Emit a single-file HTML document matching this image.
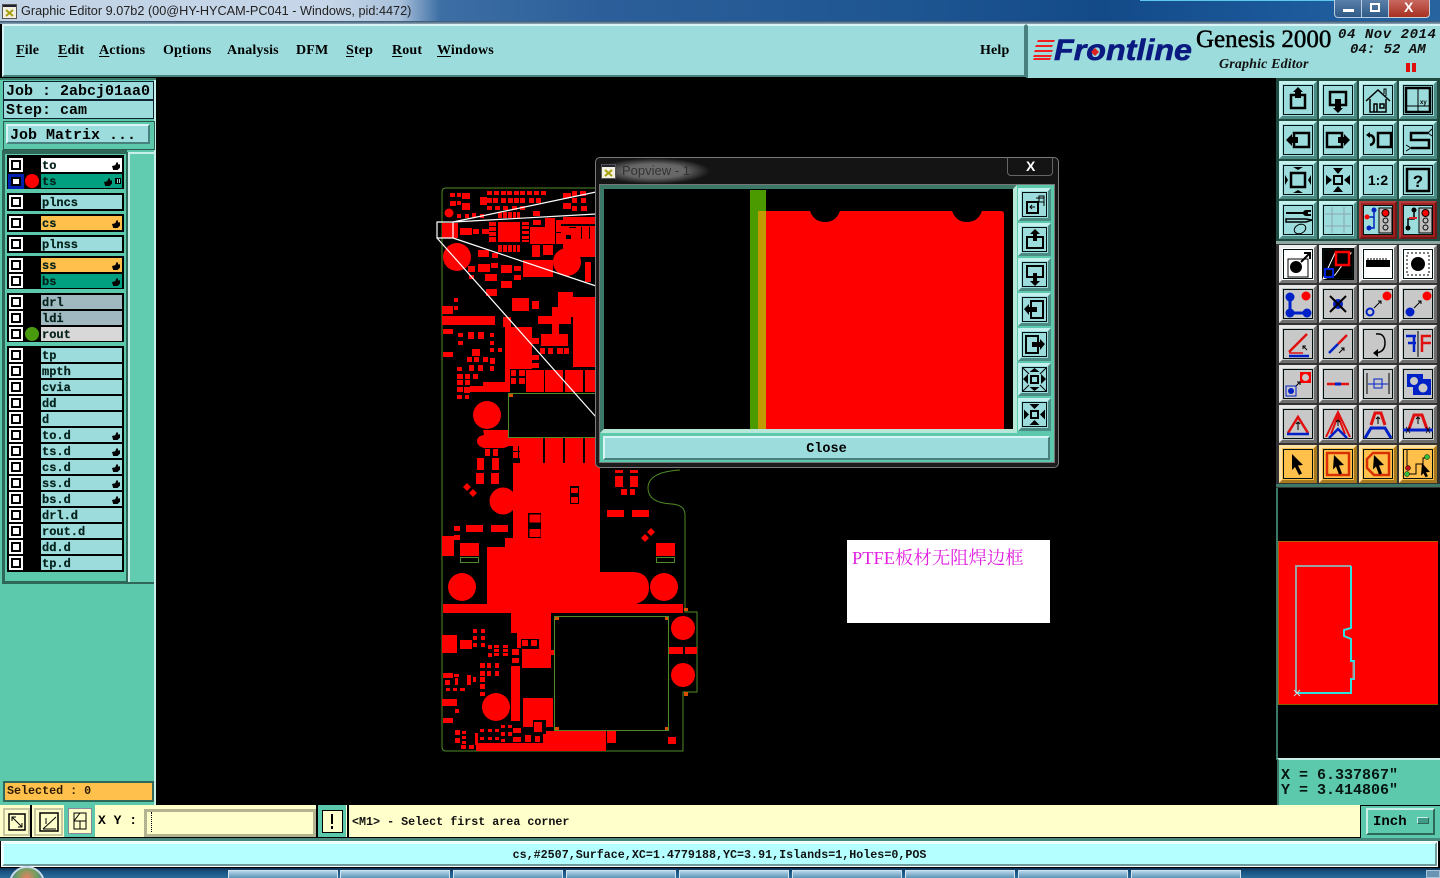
<!DOCTYPE html>
<html><head><meta charset="utf-8"><title>Graphic Editor</title>
<style>
html,body{margin:0;padding:0;background:#000;width:1440px;height:878px;overflow:hidden}
div,span{position:absolute;box-sizing:border-box}
#r{position:absolute;left:0;top:0;width:1440px;height:878px;overflow:hidden;font-family:"Liberation Mono",monospace;font-weight:bold;color:#000}
svg{position:absolute;left:0;top:0;overflow:visible}
.m{top:43px;font:bold 14px/16px "Liberation Serif",serif;color:#000;white-space:nowrap;letter-spacing:.15px}
.m u{text-underline-offset:2px}
.b{width:38px;height:38px;border:3px solid;}
.b::before{content:"";position:absolute;left:1px;top:1px;right:1px;bottom:1px;border:1px solid #011}
.b svg{left:-3px;top:-3px}
.t{background:#9cdcdc;border-color:#c4f0ee #4c8a84 #4c8a84 #c4f0ee}
.g{background:#c8c8c8;border-color:#e8e8e8 #6e6e6e #6e6e6e #e8e8e8}
.o{background:#ffc04c;border-color:#ffe2a4 #a87a20 #a87a20 #ffe2a4}
.w{background:#fff;border-color:#eee #777 #777 #eee}
.p{width:33px;height:33px}
.l{left:41px;width:81px;height:14px;background:#9cdcdc;font-size:12px;line-height:16px;padding-left:1px;white-space:nowrap;color:#04201a;-webkit-text-stroke:.2px #04201a}
.c{left:9px;width:14px;height:14px;background:#fff}
.c::after{content:"";position:absolute;left:2px;top:2px;width:10px;height:10px;border:2px solid #000;background:#fff;box-sizing:border-box}
.h{right:2px;top:4px;width:8px;height:8px;background:#000;clip-path:polygon(0 50%,40% 40%,60% 0,75% 10%,75% 30%,100% 30%,100% 70%,70% 100%,15% 100%)}
.tb{top:870px;height:8px;width:110px;background:linear-gradient(#b4d4e8,#5d94b8);border:1px solid #d0e4f0;border-bottom:0}
</style></head><body><div id="r">

<!-- title bar -->
<div style="left:0;top:0;width:1440px;height:22px;background:linear-gradient(90deg,#c2d3e6 0,#c6d6e8 330px,#a9c1db 400px,#3d6ea4 440px,#2c5f9a 600px,#1e5692 900px,#134a88 1100px,#1c5a9c 1300px,#27649f 1440px)"></div>
<div style="left:1140px;top:0;width:287px;height:1px;background:#5cc8ee"></div>
<div style="left:0;top:21px;width:1440px;height:3px;background:linear-gradient(#35506c,#8ea8b8)"></div>
<svg width="18" height="18" style="left:2px;top:4px"><rect x=".5" y=".5" width="14" height="14" fill="#f4f0e0" stroke="#555"/><rect x="1" y="1" width="13" height="2" fill="#223"/><path d="M4 6l7 6M11 6l-7 6" stroke="#a8a010" stroke-width="2"/></svg>
<div style="left:21px;top:3px;font:12.700px/16px 'Liberation Sans',sans-serif;color:#222;white-space:nowrap">Graphic Editor 9.07b2 (00@HY-HYCAM-PC041 - Windows, pid:4472)</div>
<div style="left:1334px;top:0;width:28px;height:18px;background:linear-gradient(#5a7fa8,#2f5a88);border:1px solid #b8cde0;border-top:0;border-radius:0 0 0 4px"></div>
<div style="left:1343px;top:9px;width:11px;height:3px;background:#fff"></div>
<div style="left:1362px;top:0;width:27px;height:18px;background:linear-gradient(#5a7fa8,#2f5a88);border:1px solid #b8cde0;border-top:0;border-left:0"></div>
<div style="left:1370px;top:3px;width:10px;height:9px;border:2px solid #fff"></div>
<div style="left:1389px;top:0;width:41px;height:18px;background:linear-gradient(#c86860,#a83020);border:1px solid #c8d0d8;border-top:0;border-left:0;border-radius:0 0 4px 0"></div>
<div style="left:1404px;top:0;font:bold 14px/14px 'Liberation Sans',sans-serif;color:#fff">X</div>

<!-- menu -->
<div style="left:2px;top:24px;width:1024px;height:53px;background:#9cdcdc;border:2px solid;border-color:#d8f4f4 #47807c #47807c #d8f4f4"></div>
<div class="m" style="left:16px"><u>F</u>ile</div>
<div class="m" style="left:58px"><u>E</u>dit</div>
<div class="m" style="left:99px"><u>A</u>ctions</div>
<div class="m" style="left:163px">O<u>p</u>tions</div>
<div class="m" style="left:227px">Analysis</div>
<div class="m" style="left:296px">DFM</div>
<div class="m" style="left:346px"><u>S</u>tep</div>
<div class="m" style="left:392px"><u>R</u>out</div>
<div class="m" style="left:437px"><u>W</u>indows</div>
<div class="m" style="left:980px">Help</div>

<!-- logo -->
<div style="left:1026px;top:24px;width:414px;height:54px;background:#9cdcdc;border-left:2px solid #47807c;border-top:2px solid #d8f4f4"></div>
<svg width="1440" height="80"><path d="M1038 40h17l-1 2h-17zM1036 45h17l-1 2h-17zM1035 50h18l-1 2h-18zM1034 55h18l-1 2h-18zM1034 58h17l-1 2h-17z" fill="#f02020"/>
<text x="1054" y="60" font-family="Liberation Sans" font-weight="bold" font-style="italic" font-size="30" fill="#0a1a80" stroke="#0a1a80" stroke-width=".6" textLength="138" lengthAdjust="spacingAndGlyphs">Frontline</text>
<path d="M1095 48l4 4-4 4-4-4z" fill="#e02020"/></svg>
<div style="left:1196px;top:25px;font:25px/30px 'Liberation Serif',serif;color:#000;white-space:nowrap;-webkit-text-stroke:.5px #000">Genesis 2000</div>
<div style="left:1219px;top:57px;font:italic bold 14px/16px 'Liberation Serif',serif;white-space:nowrap;color:#111;letter-spacing:.15px">Graphic Editor</div>
<div style="left:1338px;top:27px;font:italic bold 14px/16px 'Liberation Mono',monospace;white-space:pre;color:#111;letter-spacing:.55px">04 Nov 2014</div>
<div style="left:1350px;top:42px;font:italic bold 14px/16px 'Liberation Mono',monospace;white-space:pre;color:#111">04: 52 AM</div>
<div style="left:1406px;top:63px;width:4px;height:9px;background:#e01010"></div>
<div style="left:1412px;top:63px;width:4px;height:9px;background:#e01010"></div>

<!-- left panel -->
<div style="left:0;top:78px;width:156px;height:727px;background:#5cc8ac;border-right:2px solid #c8f0e8"></div>
<div style="left:0;top:78px;width:156px;height:2px;background:#3a7868"></div>
<div style="left:3px;top:81px;width:151px;height:19px;background:#9cdcdc;border:1px solid #123;font-size:15px;line-height:19px;padding-left:2px;white-space:pre">Job : 2abcj01aa0</div>
<div style="left:3px;top:100px;width:151px;height:19px;background:#9cdcdc;border:1px solid #123;font-size:15px;line-height:19px;padding-left:2px;white-space:pre">Step: cam</div>
<div style="left:3px;top:121px;width:152px;height:29px;background:#5cc8ac;border:1px solid #2a5a4c"></div>
<div style="left:6px;top:124px;width:144px;height:20px;background:#9cdcdc;border:2px solid;border-color:#d8f4f4 #47807c #47807c #d8f4f4;font-size:15px;line-height:19px;padding-left:2px;white-space:pre">Job Matrix ...</div>
<div style="left:2px;top:152px;width:124px;height:431px;border:2px solid #2f6858;border-left-width:3px;border-right:0"></div>
<div style="left:2px;top:150px;width:125px;height:3px;background:#2f6858"></div>
<div style="left:126px;top:152px;width:2px;height:431px;background:#2f6858"></div>
<div style="left:128px;top:152px;width:26px;height:431px;background:#62ccb0;border-top:2px solid #c8f0e8;border-left:2px solid #c8f0e8"></div>
<div style="left:2px;top:582px;width:152px;height:2px;background:#2f6858"></div>

<!-- layer groups -->
<div style="left:7px;top:155px;width:117px;height:34px;background:#000"></div>
<div style="left:7px;top:193px;width:117px;height:18px;background:#000"></div>
<div style="left:7px;top:214px;width:117px;height:18px;background:#000"></div>
<div style="left:7px;top:235px;width:117px;height:18px;background:#000"></div>
<div style="left:7px;top:256px;width:117px;height:33px;background:#000"></div>
<div style="left:7px;top:293px;width:117px;height:49px;background:#000"></div>
<div style="left:7px;top:346px;width:117px;height:226px;background:#000"></div>

<div class="c" style="top:158px"></div><div class="l" style="top:158px;background:#fff">to<span class="h"></span></div>
<div style="left:8px;top:174px;width:16px;height:15px;background:#0020b0"></div><div style="left:11px;top:177px;width:10px;height:9px;background:#000"></div><div style="left:13px;top:179px;width:6px;height:5px;background:#fff"></div>
<div style="left:25px;top:174px;width:14px;height:14px;border-radius:50%;background:#f00"></div>
<div class="l" style="top:174px;background:#00a080">ts<span class="h" style="right:10px"></span><span style="right:1px;top:4px;width:6px;height:6px;border:1px solid #000;background:repeating-linear-gradient(90deg,#000 0 1px,#9cdcdc 1px 2px)"></span></div>
<div class="c" style="top:195px"></div><div class="l" style="top:195px">plncs</div>
<div class="c" style="top:216px"></div><div class="l" style="top:216px;background:#ffc04c">cs<span class="h"></span></div>
<div class="c" style="top:237px"></div><div class="l" style="top:237px">plnss</div>
<div class="c" style="top:258px"></div><div class="l" style="top:258px;background:#ffc04c">ss<span class="h"></span></div>
<div class="c" style="top:274px"></div><div class="l" style="top:274px;background:#00a080">bs<span class="h"></span></div>
<div class="c" style="top:295px"></div><div class="l" style="top:295px;background:#a0b8c0">drl</div>
<div class="c" style="top:311px"></div><div class="l" style="top:311px;background:#a0b8c0">ldi</div>
<div class="c" style="top:327px"></div><div class="l" style="top:327px;background:#d8d8d8">rout</div>
<div style="left:25px;top:327px;width:14px;height:14px;border-radius:50%;background:#4a9a10"></div>
<div class="c" style="top:348px"></div><div class="l" style="top:348px">tp</div>
<div class="c" style="top:364px"></div><div class="l" style="top:364px">mpth</div>
<div class="c" style="top:380px"></div><div class="l" style="top:380px">cvia</div>
<div class="c" style="top:396px"></div><div class="l" style="top:396px">dd</div>
<div class="c" style="top:412px"></div><div class="l" style="top:412px">d</div>
<div class="c" style="top:428px"></div><div class="l" style="top:428px">to.d<span class="h"></span></div>
<div class="c" style="top:444px"></div><div class="l" style="top:444px">ts.d<span class="h"></span></div>
<div class="c" style="top:460px"></div><div class="l" style="top:460px">cs.d<span class="h"></span></div>
<div class="c" style="top:476px"></div><div class="l" style="top:476px">ss.d<span class="h"></span></div>
<div class="c" style="top:492px"></div><div class="l" style="top:492px">bs.d<span class="h"></span></div>
<div class="c" style="top:508px"></div><div class="l" style="top:508px">drl.d</div>
<div class="c" style="top:524px"></div><div class="l" style="top:524px">rout.d</div>
<div class="c" style="top:540px"></div><div class="l" style="top:540px">dd.d</div>
<div class="c" style="top:556px"></div><div class="l" style="top:556px">tp.d</div>

<div style="left:3px;top:781px;width:151px;height:21px;background:#ffc04c;border:2px solid #2f6858;font-size:11.700px;line-height:17px;padding-left:2px;white-space:pre;color:#2a1a00">Selected : 0</div>

<!-- PCB -->
<svg width="1440" height="878">
<path fill="none" stroke="#4f8a28" stroke-width="1" d="M442 192q0-4 4-4H600M442 192V747q0 4 4 4H683V692H697V612H685V515Q685 505 672 504Q648 503 648 488Q648 472 680 470"/>
<g fill="#f00">
<path d="M450 193h5v4h-5zM457 193h4v4h-4zM462 193h8v6h-8zM450 201h6v5h-6zM457 201h4v4h-4zM462 203h8v7h-8z
M487 191h5v4h-5zM494 191h5v4h-5zM501 191h5v4h-5zM507 191h5v4h-5zM514 191h5v4h-5zM520 191h5v4h-5zM527 191h5v4h-5zM534 191h5v4h-5zM541 191h5v4h-5z
M480 197h7v8h-7zM487 198h5v5h-5zM493 198h5v5h-5zM501 198h5v5h-5zM508 198h5v5h-5zM514 198h5v5h-5zM520 198h5v5h-5zM529 198h5v5h-5zM536 198h5v5h-5z
M487 206h5v4h-5zM495 206h5v4h-5zM503 206h5v4h-5zM512 206h5v4h-5zM520 206h5v4h-5z
M457 214h4v4h-4zM465 214h4v4h-4zM472 213h4v4h-4zM480 214h4v4h-4z
M498 212h4v6h-4zM503 212h4v6h-4zM508 212h4v6h-4zM513 212h3v6h-3zM517 212h3v6h-3z
M498 245h4v7h-4zM503 245h4v7h-4zM508 245h4v7h-4zM513 245h3v7h-3zM517 245h3v7h-3z
M563 193h8v5h-8zM572 191h5v5h-5zM580 191h6v5h-6zM563 203h8v6h-8zM572 198h5v5h-5zM581 198h5v5h-5zM572 206h5v5h-5zM581 206h6v5h-6z
M533 211h7v5h-7zM533 220h8v5h-8z
M498 222h22v20h-22zM489 222h7v4h-7zM489 227h7v4h-7zM489 232h7v4h-7zM489 237h7v5h-7zM522 222h7v3h-7zM522 226h7v3h-7zM522 231h7v3h-7zM522 236h7v3h-7zM522 240h7v2h-7z
M442 223h12v15h-12zM454 223h4v15h-4zM460 228h12v7h-12zM473 229h6v5h-6zM482 229h7v5h-7zM489 237h7v5h-7z
M530 227h25v17h-25zM545 218h10v10h-10zM563 217h32v10h-32zM556 220h7v24h-7zM563 227h32v30h-32zM532 245h8v12h-8zM543 245h10v10h-10z
M523 260h30v17h-30zM585 262h6v20h-6z
M478 250h11v7h-11zM492 253h6v5h-6zM468 266h7v6h-7zM478 264h12v8h-12zM491 263h7v5h-7zM501 265h11v8h-11zM514 266h7v5h-7zM469 275h5v4h-5zM485 274h12v7h-12zM514 275h7v5h-7zM501 281h11v7h-11zM486 289h11v7h-11z
M454 298h4v4h-4zM454 306h4v4h-4zM442 306h11v8h-11zM442 316h53v9h-53z
M443 329h10v5h-10zM458 333h5v4h-5zM468 332h6v7h-6zM478 332h6v7h-6zM490 333h4v4h-4zM458 341h5v4h-5zM490 341h4v4h-4zM490 348h4v4h-4zM498 348h4v4h-4z
M443 352h10v5h-10zM472 349h8v7h-8zM467 357h5v5h-5zM474 357h5v5h-5zM483 357h5v5h-5zM490 358h5v6h-5zM469 365h5v6h-5zM478 365h5v6h-5zM490 366h4v5h-4z
M457 367h5v4h-5zM457 374h6v5h-6zM465 374h5v5h-5zM473 374h5v5h-5zM457 380h6v5h-6zM465 380h5v5h-5zM457 387h6v5h-6zM464 387h6v6h-6zM470 386h40v6h-40zM483 382h27v5h-27zM457 395h5v4h-5zM465 395h4v4h-4z
M503 317h8v10h-8zM505 327h27v42h-27zM512 298h17v13h-17zM532 301h7v8h-7z
M552 307h7v27h-7zM538 316h33v8h-33zM541 334h27v12h-27zM558 292h15v25h-15zM573 297h22v70h-22z
M532 338h7v6h-7zM540 348h5v6h-5zM548 348h5v6h-5zM557 348h6v6h-6zM564 348h5v6h-5zM532 355h7v5h-7zM532 363h7v5h-7z
M505 369h5v14h-5zM511 370h5v6h-5zM519 370h6v6h-6zM511 378h5v6h-5zM519 378h6v6h-6zM526 370h18v22h-18zM545 370h18v22h-18zM565 370h18v22h-18zM585 370h10v22h-10z
M477 458h7v12h-7zM492 458h7v12h-7zM485 449h5v7h-5zM493 449h5v7h-5z
M520 438h23v25h-23zM545 438h18v25h-18zM565 438h18v25h-18zM585 438h10v25h-10zM513 445h5v6h-5zM513 452h5v6h-5zM519 445h6v6h-6zM519 452h6v6h-6z
M476 473h8v11h-8zM491 473h8v11h-8z
M513 463H600V572H632Q649 572 649 588Q649 600 636 604H683V613H551V650H554V655H551V668H522V648H517V633H511V613H443V604H487V547H505V538H513z
M454 526h6v5h-6zM466 525h17v7h-17zM491 525h17v7h-17zM454 535h6v5h-6zM442 536h12v20h-12zM460 543h19v13h-19z
M615 470h8v3h-8zM630 470h8v3h-8zM615 476h8v11h-8zM630 476h8v11h-8zM621 489h6v6h-6zM630 489h5v6h-5zM607 510h17v7h-17zM632 510h17v7h-17zM656 543h19v13h-19z
M442 635h15v18h-15zM460 640h12v9h-12z
M473 629h4v4h-4zM481 629h4v4h-4zM473 636h4v4h-4zM481 636h4v4h-4zM473 643h4v4h-4zM481 643h4v4h-4z
M488 645h4v4h-4zM494 645h5v3h-5zM494 649h5v3h-5zM494 653h5v3h-5zM503 645h5v3h-5zM503 649h5v3h-5zM503 653h5v3h-5zM488 653h4v4h-4z
M512 649h7v6h-7zM512 658h7v5h-7z
M480 663h5v5h-5zM487 663h4v5h-4zM495 663h4v5h-4zM480 671h5v5h-5zM487 671h4v5h-4zM495 671h4v5h-4zM480 677h5v5h-5zM480 684h5v5h-5zM480 692h5v4h-5z
M511 666h9v55h-9zM443 673h10v5h-10zM454 674h5v3h-5zM455 678h3v7h-3zM445 680h5v5h-5zM446 688h4v3h-4zM453 688h4v3h-4zM460 688h5v3h-5zM467 675h4v10h-4zM473 677h3v5h-3z
M523 698h30v29h-30zM442 699h15v7h-15zM455 709h4v4h-4zM443 718h10v5h-10z
M455 730h5v5h-5zM455 738h5v5h-5zM462 731h4v3h-4zM462 736h4v3h-4zM462 741h4v3h-4zM475 733h3v12h-3z
M480 729h4v3h-4zM488 729h4v3h-4zM495 729h4v3h-4zM480 737h4v3h-4zM488 737h4v3h-4zM495 737h4v3h-4zM501 725h4v3h-4zM508 725h4v3h-4zM501 732h4v4h-4zM508 732h4v4h-4zM501 739h4v3h-4zM513 728h8v5h-8zM513 737h8v5h-8zM525 735h6v7h-6zM535 736h5v6h-5z
M461 745h5v4h-5zM469 745h5v4h-5zM543 731h63v20h-63zM476 743h130v8h-130zM607 731h9v12h-9zM668 737h8v7h-8z
M669 647h14v7h-14zM685 647h12v7h-12z"/>
<circle cx="449" cy="213" r="4.500"/><circle cx="457" cy="257" r="14"/><circle cx="567" cy="262" r="14"/><circle cx="487" cy="415" r="14"/>
<path d="M483 430h26v8h14v8h-14l-5 2h-20q-7-2-7-7t7-6z"/>
<path d="M467 483l4 4-4 4-4-4zM473 489l4 4-4 4-4-4zM651 528l4 4-4 4-4-4zM645 534l4 4-4 4-4-4z"/>
<circle cx="503" cy="501" r="13.500"/><circle cx="462" cy="587" r="14"/><circle cx="664" cy="587" r="14"/><circle cx="496" cy="707" r="14"/><circle cx="683" cy="628" r="12"/><circle cx="683" cy="675" r="12"/>
</g>
<path fill="#000" d="M528 513h13v25h-13zM570 486h9v18h-9zM521 639h18v10h-18zM533 720h13v14h-13z"/>
<path fill="#f00" d="M529.500 514.500h11v8h-11zM529.500 529h11v8h-11zM571 488h7v5h-7zM571 497h7v6h-7zM522 640h6v6h-6zM531 640h6v6h-6zM534 722h8v10h-8z"/>
<path fill="#000" d="M561 224h34v2h-34zM566 235h5v4h-5zM556 232h5v1h-5zM569 227h7v1h-7zM581 227h1v12h-1zM589 227h1v12h-1z"/>
<rect x="508.500" y="393.500" width="90" height="44" fill="#000" stroke="#4f8a28"/>
<rect x="554.500" y="616.500" width="114" height="114" fill="#000" stroke="#4f8a28"/>
<rect x="460.500" y="557.500" width="18" height="5" fill="none" stroke="#4f8a28"/><rect x="656.500" y="557.500" width="18" height="5" fill="none" stroke="#4f8a28"/>
<path fill="#d85000" d="M509 394h4v3h-4zM555 617h4v3h-4zM665 617h3v3h-3zM555 727h4v3h-4zM665 727h3v3h-3zM684 608h4v3h-4zM684 692h4v4h-4z"/>
<path fill="none" stroke="#fff" stroke-width="1.200" d="M437 222H453V238H437ZM453 222L596 192M453 222L596 214M453 238L596 286M437 238L596 417"/>
</svg>

<!-- PTFE note -->
<div style="left:847px;top:540px;width:203px;height:83px;background:#fff"></div>
<div style="left:852px;top:546px;font:18.400px/24px 'Liberation Serif','Noto Serif CJK SC',serif;color:#e020e0;white-space:nowrap">PTFE板材无阻焊边框</div>

<!-- popup -->
<div style="left:595px;top:157px;width:464px;height:311px;background:linear-gradient(#141414,#1c1c1c);border:1px solid #7a7a7a;border-radius:5px"></div>
<div style="left:598px;top:158px;width:112px;height:26px;background:radial-gradient(closest-side,#707070 0,#666 55%,rgba(80,80,80,0) 100%)"></div>
<svg width="16" height="16" style="left:601px;top:164px"><rect x=".5" y=".5" width="14" height="14" fill="#f4f0e0" stroke="#555"/><rect x="1" y="1" width="13" height="2" fill="#223"/><path d="M4 6l7 6M11 6l-7 6" stroke="#a8a010" stroke-width="2"/></svg>
<div style="left:622px;top:163px;font:13px/16px 'Liberation Sans',sans-serif;color:#333;white-space:nowrap">Popview - 1</div>
<div style="left:1007px;top:157px;width:46px;height:19px;border:1px solid #666;border-top:0;border-radius:0 0 4px 4px"></div>
<div style="left:1026px;top:158px;font:bold 14px/16px 'Liberation Sans',sans-serif;color:#fff">X</div>
<div style="left:599px;top:184px;width:456px;height:279px;background:#5cc8ac;border:1px solid #777"></div>
<div style="left:600px;top:185px;width:417px;height:248px;background:#000;border:4px solid;border-color:#3c7868 #b8e8d8 #b8e8d8 #3c7868"></div>
<div style="left:750px;top:190px;width:16px;height:239px;background:#4a9a00"></div>
<div style="left:758px;top:211px;width:8px;height:218px;background:#c09a00"></div>
<svg width="1440" height="878"><path fill="#f00" d="M766 211H810Q814 222 825 222Q836 222 840 211H952Q956 222 967 222Q978 222 982 211H1001Q1004 211 1004 214V429H766z"/></svg>

<div class="b t p" style="left:1018px;top:188px"><svg width="33" height="33"><path d="M9 14h11v11H9z" fill="none" stroke="#000" stroke-width="2"/><path d="M18 10h8v8" fill="none" stroke="#000"/><path d="M21 8h5v6h-5z" fill="none" stroke="#000"/><path d="M17 19h-5m2-2l-2 2 2 2" fill="none" stroke="#000"/></svg></div>
<div class="b t p" style="left:1018px;top:223px"><svg width="33" height="33"><path d="M9 14h16v11H9z" fill="none" stroke="#000" stroke-width="2"/><path d="M17 6l-5 5h3v7h4v-7h3z"/></svg></div>
<div class="b t p" style="left:1018px;top:258px"><svg width="33" height="33"><path d="M9 8h16v11H9z" fill="none" stroke="#000" stroke-width="2"/><path d="M17 28l-5-5h3v-8h4v8h3z"/></svg></div>
<div class="b t p" style="left:1018px;top:293px"><svg width="33" height="33"><path d="M13 8h12v17H13z" fill="none" stroke="#000" stroke-width="2"/><path d="M6 16l5-5v3h8v5h-8v3z"/></svg></div>
<div class="b t p" style="left:1018px;top:328px"><svg width="33" height="33"><path d="M8 8h12v17H8z" fill="none" stroke="#000" stroke-width="2"/><path d="M27 16l-5-5v3h-8v5h8v3z"/></svg></div>
<div class="b t p" style="left:1018px;top:363px"><svg width="33" height="33"><path d="M13 13h7v7h-7z" fill="none" stroke="#000" stroke-width="2"/><path d="M5 16l5-5v10zM28 16l-5-5v10zM16.500 5l-5 4h10zM16.500 28l-5-4h10z"/><path d="M5 5l6 6M28 5l-6 6M5 28l6-6M28 28l-6-6" stroke="#000"/></svg></div>
<div class="b t p" style="left:1018px;top:398px"><svg width="33" height="33"><path d="M13 13h7v7h-7z" fill="none" stroke="#000" stroke-width="2"/><path d="M11 16.500l-5 5v-10zM22 16.500l5 5v-10zM16.500 11l-5-5h10zM16.500 22l-5 5h10z"/></svg></div>

<div style="left:603px;top:436px;width:447px;height:24px;background:#9cdcdc;border:2px solid;border-color:#d8f4f4 #47807c #47807c #d8f4f4;text-align:center;font-size:13.500px;line-height:23px">Close</div>

<!-- right panel -->
<div style="left:1276px;top:78px;width:164px;height:410px;background:#1f4a40"></div>
<div style="left:1276px;top:241px;width:164px;height:3px;background:#8ca8a0"></div>
<div style="left:1276px;top:244px;width:164px;height:244px;background:#333"></div>
<div style="left:1276px;top:484px;width:164px;height:3px;background:#3a7868"></div>

<div class="b t" style="left:1279px;top:81px"><svg width="38" height="38"><path d="M12 14h14v13H12z" fill="none" stroke="#000" stroke-width="2.500"/><path d="M19 6l-5 5h2v6h6v-6h2z"/></svg></div>
<div class="b t" style="left:1319px;top:81px"><svg width="38" height="38"><path d="M11 11h16v13H11z" fill="none" stroke="#000" stroke-width="2.500"/><path d="M19 32l-5-5h2v-9h6v9h2z"/></svg></div>
<div class="b t" style="left:1359px;top:81px"><svg width="38" height="38"><path d="M7 20L19 9l12 11M11 18v13h16V18M15 23h3v8h-3zM21 23h4v4h-4z" fill="none" stroke="#000" stroke-width="1.500"/><path d="M25 13V8h2v7" fill="none" stroke="#000"/></svg></div>
<div class="b t" style="left:1399px;top:81px"><svg width="38" height="38"><path d="M7 7h24v24H7z" fill="none" stroke="#000" stroke-width="2.500"/><path d="M19 7v24M7 25h24" stroke="#000"/><text x="21" y="23" font-size="6" font-family="Liberation Sans">xy</text></svg></div>

<div class="b t" style="left:1279px;top:121px"><svg width="38" height="38"><path d="M15 12h15v14H15z" fill="none" stroke="#000" stroke-width="2.500"/><path d="M7 19l6-6v3h6v6h-6v3z"/></svg></div>
<div class="b t" style="left:1319px;top:121px"><svg width="38" height="38"><path d="M8 12h15v14H8z" fill="none" stroke="#000" stroke-width="2.500"/><path d="M31 19l-6-6v3h-6v6h6v3z"/></svg></div>
<div class="b t" style="left:1359px;top:121px"><svg width="38" height="38"><path d="M19 12h13v14H19z" fill="none" stroke="#000" stroke-width="2.500"/><path d="M11 14q4 1 4 5t-4 5" fill="none" stroke="#000" stroke-width="2.500"/><path d="M7 14l4-3v6z"/></svg></div>
<div class="b t" style="left:1399px;top:121px"><svg width="38" height="38"><path d="M29 12H12v7h18v8H12" fill="none" stroke="#000" stroke-width="2.500"/><path d="M29 12l4-4M29 12l4 3M12 27l-5-3M12 27l-5 3" stroke="#000" fill="none"/></svg></div>

<div class="b t" style="left:1279px;top:161px"><svg width="38" height="38"><path d="M12 12h14v14H12z" fill="none" stroke="#000" stroke-width="2.500"/><path d="M19 9l-5-3h10zM19 29l-5 3h10zM9 19l-3-5v10zM29 19l3-5v10z"/></svg></div>
<div class="b t" style="left:1319px;top:161px"><svg width="38" height="38"><path d="M15 15h8v8h-8z" fill="none" stroke="#000" stroke-width="2"/><path d="M13 19l-6-5v10zM25 19l6-5v10zM19 13l-5-6h10zM19 25l-5 6h10z"/></svg></div>
<div class="b t" style="left:1359px;top:161px"><svg width="38" height="38"><text x="19" y="24" text-anchor="middle" font-size="14" font-weight="bold" font-family="Liberation Sans">1:2</text></svg></div>
<div class="b t" style="left:1399px;top:161px"><svg width="38" height="38"><path d="M8 8h22v22H8z" fill="none" stroke="#000" stroke-width="2.500"/><text x="19" y="26" text-anchor="middle" font-size="17" font-weight="bold" font-family="Liberation Sans">?</text></svg></div>

<div class="b t" style="left:1279px;top:201px"><svg width="38" height="38"><path d="M7 18h20l6 1-6 2H7z" fill="none" stroke="#000" stroke-width="1.500"/><path d="M7 11h20v2H7z"/><path d="M27 9a3 3 0 0 0 0 6h5v-2h-3v-2h3V9z"/><ellipse cx="21" cy="28" rx="6" ry="4.500" fill="none" stroke="#000" transform="rotate(-25 21 28)"/></svg></div>
<div class="b t" style="left:1319px;top:201px"><svg width="38" height="38"><path d="M6 13h26M6 25h26M13 6v26M25 6v26" stroke="#88a8b0"/></svg></div>
<div class="b t" style="left:1359px;top:201px;border-color:#b04040 #701818 #701818 #b04040;background:#9cdcdc"><svg width="38" height="38"><rect x="3" y="3" width="32" height="32" fill="none" stroke="#a02020" stroke-width="2"/><path d="M15 9v18H9M15 16H8" fill="none" stroke="#0020c0" stroke-width="1.500"/><circle cx="15" cy="9" r="2.500" fill="#0020c0"/><circle cx="8" cy="16" r="2.500" fill="#f00"/><circle cx="10" cy="27" r="2.500" fill="#0020c0"/><rect x="20" y="7" width="13" height="25" fill="#c0c0c0" stroke="#000"/><circle cx="26.500" cy="12" r="3.500" fill="#f00" stroke="#000"/><circle cx="26.500" cy="19.500" r="2.500" fill="none" stroke="#000"/><circle cx="26.500" cy="26.500" r="2.500" fill="none" stroke="#000"/></svg></div>
<div class="b t" style="left:1399px;top:201px;border-color:#b04040 #701818 #701818 #b04040;background:#9cdcdc"><svg width="38" height="38"><rect x="3" y="3" width="32" height="32" fill="none" stroke="#a02020" stroke-width="2"/><path d="M15 9v9H9v9" fill="none" stroke="#000" stroke-width="1.500"/><path d="M10 17h8" stroke="#e02020" stroke-width="2"/><circle cx="15" cy="9" r="2.500"/><circle cx="9" cy="27" r="2.500"/><rect x="20" y="7" width="13" height="25" fill="#c0c0c0" stroke="#000"/><circle cx="26.500" cy="12" r="3.500" fill="#f00" stroke="#000"/><circle cx="26.500" cy="19.500" r="2.500" fill="none" stroke="#000"/><circle cx="26.500" cy="26.500" r="2.500" fill="none" stroke="#000"/></svg></div>

<div class="b w" style="left:1279px;top:245px"><svg width="38" height="38"><path d="M9 14h20v18H9z" fill="none" stroke="#000"/><circle cx="17" cy="22" r="6"/><path d="M22 17l8-8M25 8h6v6" stroke="#000" stroke-width="2" fill="none"/></svg></div>
<div class="b w" style="left:1319px;top:245px;background:#000"><svg width="38" height="38"><path d="M4 34L16 8h16L16 30z" fill="none" stroke="#fff"/><rect x="17" y="7" width="13" height="13" fill="#000" stroke="#f00" stroke-width="2.500"/><rect x="6" y="24" width="8" height="8" fill="#000" stroke="#0020e0" stroke-width="2"/></svg></div>
<div class="b w" style="left:1359px;top:245px"><svg width="38" height="38"><path d="M7 15h24v7H7z"/><path d="M9 15v-2M12 15v-2M15 15v-2M18 15v-2M21 15v-2M24 15v-2M27 15v-2" stroke="#000"/></svg></div>
<div class="b w" style="left:1399px;top:245px"><svg width="38" height="38"><path d="M8 8h22v22H8z" fill="none" stroke="#000" stroke-dasharray="2 2"/><circle cx="19" cy="19" r="7"/></svg></div>

<div class="b g" style="left:1279px;top:285px"><svg width="38" height="38"><path d="M11 12v16h17" fill="none" stroke="#0020c8" stroke-width="3"/><circle cx="11" cy="12" r="4.500" fill="#0020c8"/><circle cx="11" cy="28" r="4.500" fill="#0020c8"/><circle cx="28" cy="28" r="4.500" fill="#0020c8"/><circle cx="27" cy="11" r="4.500" fill="#f00"/></svg></div>
<div class="b g" style="left:1319px;top:285px"><svg width="38" height="38"><circle cx="19" cy="19" r="5" fill="#0020c8"/><path d="M11 11l16 16M27 11L11 27" stroke="#000" stroke-width="2"/></svg></div>
<div class="b g" style="left:1359px;top:285px"><svg width="38" height="38"><circle cx="11" cy="27" r="3.500" fill="none" stroke="#0020c8" stroke-width="2"/><circle cx="28" cy="11" r="4.500" fill="#f00"/><path d="M15 23l7-7M19 16h3v3" stroke="#000" fill="none"/></svg></div>
<div class="b g" style="left:1399px;top:285px"><svg width="38" height="38"><circle cx="11" cy="27" r="4.500" fill="#0020c8"/><circle cx="28" cy="11" r="4.500" fill="#f00"/><path d="M15 23l7-7M19 16h3v3" stroke="#000" fill="none"/></svg></div>

<div class="b g" style="left:1279px;top:325px"><svg width="38" height="38"><path d="M10 27L28 9" stroke="#e01010" stroke-width="2.500"/><path d="M10 31h20" stroke="#0020c8" stroke-width="2.500"/><path d="M10 28h14" stroke="#e01010" stroke-width="1.500"/><path d="M28 25l-4-4M24 24v-3h3" stroke="#000" fill="none"/></svg></div>
<div class="b g" style="left:1319px;top:325px"><svg width="38" height="38"><path d="M10 28L19 19" stroke="#0020c8" stroke-width="2.500"/><path d="M19 19L28 10" stroke="#e01010" stroke-width="2.500"/><path d="M20 28l5-5M22 23h3v3" stroke="#000" fill="none"/></svg></div>
<div class="b g" style="left:1359px;top:325px"><svg width="38" height="38"><path d="M17 9q9-1 9 9t-11 10" fill="none" stroke="#000" stroke-width="1.500"/><path d="M14 28l5-4v8z"/></svg></div>
<div class="b g" style="left:1399px;top:325px"><svg width="38" height="38"><path d="M19 6v26" stroke="#000"/><path d="M17 11H7M17 18H9M15 11v16" fill="none" stroke="#0020c8" stroke-width="2.500"/><path d="M32 11H23v16M32 18H23" fill="none" stroke="#e01010" stroke-width="2.500"/></svg></div>

<div class="b g" style="left:1279px;top:365px"><svg width="38" height="38"><rect x="21" y="7" width="11" height="11" fill="#f00"/><circle cx="26.500" cy="12.500" r="3.500" fill="#c8c8c8"/><rect x="7" y="21" width="10" height="10" fill="none" stroke="#0020c8"/><circle cx="12" cy="26" r="3" fill="#0020c8"/><path d="M17 21l4-4M18 17h3v3" stroke="#000" fill="none"/></svg></div>
<div class="b g" style="left:1319px;top:365px"><svg width="38" height="38"><path d="M8 19h22" stroke="#e01010" stroke-width="2.500"/><path d="M16 19h6" stroke="#0020c8" stroke-width="3"/></svg></div>
<div class="b g" style="left:1359px;top:365px"><svg width="38" height="38"><path d="M8 8v21M30 8v21" stroke="#000"/><path d="M9 19h20" stroke="#0020c8"/><rect x="15" y="14" width="8" height="9" fill="none" stroke="#0020c8"/></svg></div>
<div class="b g" style="left:1399px;top:365px"><svg width="38" height="38"><path d="M8 9h16v5h8v16H14v-8H8z" fill="#0020c8"/><circle cx="15" cy="16" r="4" fill="#c8c8c8"/><circle cx="24" cy="23" r="4.500" fill="#c8c8c8"/></svg></div>

<div class="b g" style="left:1279px;top:405px"><svg width="38" height="38"><path d="M9 28L19 12l10 16" fill="none" stroke="#e01010" stroke-width="2.500"/><path d="M8 29h22" stroke="#0020c8" stroke-width="2.500"/><path d="M19 17v8M17 19l2-2 2 2" stroke="#000" fill="none"/></svg></div>
<div class="b g" style="left:1319px;top:405px"><svg width="38" height="38"><path d="M7 32L19 7l12 25M12 29l7-18 7 18" fill="none" stroke="#e01010" stroke-width="2"/><path d="M10 33l9-9 9 9" fill="none" stroke="#0020c8" stroke-width="2.500"/><path d="M19 15v6M17 17l2-2 2 2" stroke="#000" fill="none"/></svg></div>
<div class="b g" style="left:1359px;top:405px"><svg width="38" height="38"><path d="M12 20l4-12h6l4 12" fill="none" stroke="#e01010" stroke-width="3"/><path d="M6 33l6-10h14l6 10" fill="none" stroke="#0020c8" stroke-width="3"/><path d="M19 12v7M17 14l2-2 2 2" stroke="#000" fill="none"/></svg></div>
<div class="b g" style="left:1399px;top:405px"><svg width="38" height="38"><path d="M10 24l5-14h8l5 14" fill="none" stroke="#e01010" stroke-width="3"/><path d="M4 25h30" stroke="#0020c8" stroke-width="3"/><path d="M19 12v7M17 14l2-2 2 2" stroke="#000" fill="none"/><path d="M7 22l4 6M11 22l-4 6M27 22l4 6M31 22l-4 6" stroke="#000" stroke-width=".7"/></svg></div>

<div class="b o" style="left:1279px;top:445px"><svg width="38" height="38"><path d="M13 9l11 11-5 .5 4 8-3 1.500-4-8-3 3z"/></svg></div>
<div class="b o" style="left:1319px;top:445px"><svg width="38" height="38"><path d="M8 8h22v22H8z" fill="none" stroke="#d83000" stroke-width="2.500"/><path d="M15 10l10 10-5 .5 3 8-3 1-3-8-3 3z"/></svg></div>
<div class="b o" style="left:1359px;top:445px"><svg width="38" height="38"><path d="M14 8h16v22H15l-7-7V14z" fill="none" stroke="#d83000" stroke-width="2.500"/><path d="M15 10l10 10-5 .5 3 8-3 1-3-8-3 3z"/></svg></div>
<div class="b o" style="left:1399px;top:445px"><svg width="38" height="38"><path d="M8 5v18M10 29h7v-10h7v-6h4" fill="none" stroke="#000"/><circle cx="9" cy="23" r="2.500" fill="#c01010" stroke="#000" stroke-width=".5"/><circle cx="8" cy="29" r="2.500" fill="#30c040" stroke="#000" stroke-width=".5"/><circle cx="28" cy="12" r="2.500" fill="#30c040" stroke="#000" stroke-width=".5"/><path d="M23 18l8 9-4 .3 2 4-2.500 1-2-4-2.500 2.500z"/></svg></div>

<!-- minimap -->
<div style="left:1276px;top:488px;width:2px;height:272px;background:#3a7868"></div>
<div style="left:1278px;top:488px;width:162px;height:270px;background:#000"></div>
<div style="left:1278px;top:541px;width:160px;height:164px;background:#f00;border-top:1px solid #b06000;border-left:1px solid #b06000;border-bottom:1px solid #806000"></div>
<svg width="1440" height="878"><path d="M1296 693V566H1351" fill="none" stroke="#a0a0a0" stroke-width="2"/><path d="M1351 566V628L1344 630V636L1351 639V661H1354V679H1351V693H1296" fill="none" stroke="#30e0e0" stroke-width="2"/><path d="M1353.500 662V679" stroke="#a0a0a0" stroke-width="2"/><path d="M1294 690l6 6M1300 690l-6 6" stroke="#c0e0e0"/></svg>
<div style="left:1277px;top:758px;width:163px;height:47px;background:#5cc8ac;border-top:2px solid #c8f0e8;border-left:2px solid #3a7868;font-size:15px;line-height:15px;padding:8px 0 0 2px;white-space:pre;color:#04150f">X = 6.337867"
Y = 3.414806"</div>

<!-- bottom -->
<div style="left:0;top:805px;width:1440px;height:35px;background:#ffffcc;border-bottom:3px solid #000"></div>
<div style="left:3px;top:808px;width:27px;height:28px;border:2px solid #c8c8a0;background:#ffffcc"></div>
<svg width="28" height="28" style="left:3px;top:808px"><path d="M6 6h16v16H6z" fill="none" stroke="#000" stroke-width="1.500"/><path d="M9 9l10 10M9 13V9h4M19 15v4h-4" fill="none" stroke="#000"/></svg>
<div style="left:30px;top:805px;width:2px;height:32px;background:#000"></div>
<div style="left:34px;top:808px;width:29px;height:28px;border:2px solid #c8c8a0;background:#ffffcc"></div>
<svg width="28" height="28" style="left:35px;top:808px"><path d="M5 5h18v18H5z" fill="none" stroke="#000" stroke-width="1.500"/><path d="M8 21L21 9M8 21h13M11 10v6" fill="none" stroke="#000"/></svg>
<div style="left:64px;top:805px;width:31px;height:32px;background:#5cc8ac;border:3px solid #5cc8ac"></div>
<div style="left:68px;top:808px;width:24px;height:26px;background:#ffffcc;border:1px solid #889"></div>
<svg width="24" height="24" style="left:68px;top:809px"><path d="M6 4h12v16H6zM6 12h12M12 12v8M12 4l-6 8" fill="none" stroke="#000"/></svg>
<div style="left:98px;top:813px;font-size:13px;line-height:16px;white-space:pre">X Y :</div>
<div style="left:144px;top:809px;width:172px;height:28px;background:#ffffcc;border:3px solid #b4b490"></div>
<div style="left:151px;top:812px;width:1px;height:20px;border-left:1px dotted #000"></div>
<div style="left:316px;top:805px;width:2px;height:32px;background:#000"></div>
<div style="left:318px;top:805px;width:28px;height:32px;background:#5cc8ac"></div>
<div style="left:322px;top:810px;width:21px;height:23px;background:#ffffcc;border:1px solid #000"></div>
<div style="left:331px;top:814px;width:2px;height:10px;background:#000"></div>
<div style="left:331px;top:826px;width:2px;height:3px;background:#000"></div>
<div style="left:347px;top:805px;width:2px;height:32px;background:#000"></div>
<div style="left:352px;top:814px;font-size:11.700px;line-height:16px;white-space:pre;color:#111">&lt;M1&gt; - Select first area corner</div>

<div style="left:1360px;top:805px;width:80px;height:33px;background:#000"></div>
<div style="left:1361px;top:806px;width:79px;height:32px;background:#5cc8ac"></div>
<div style="left:1366px;top:808px;width:69px;height:27px;border:2px solid;border-color:#c8f0e8 #2f6858 #2f6858 #c8f0e8;background:#5cc8ac;font-size:14px;line-height:25px;padding-left:5px">Inch</div>
<div style="left:1417px;top:817px;width:12px;height:7px;background:#3f9c88;border:1px solid;border-color:#c8f0e8 #2f6858 #2f6858 #c8f0e8"></div>

<div style="left:0;top:838px;width:1440px;height:3px;background:#48887c"></div>
<div style="left:0;top:841px;width:1440px;height:27px;background:#000"></div>
<div style="left:2px;top:842px;width:1435px;height:24px;background:#b4ffff;border:2px solid;border-color:#e8ffff #6e9c9c #6e9c9c #e8ffff;outline:1px solid #fff;text-align:center;font-size:11.700px;line-height:23px;color:#111">cs,#2507,Surface,XC=1.4779188,YC=3.91,Islands=1,Holes=0,POS</div>

<!-- taskbar -->
<div style="left:0;top:868px;width:1440px;height:10px;background:linear-gradient(#0c2c50,#18507e 30%,#2a6c9a)"></div>
<div style="left:9px;top:866px;width:36px;height:36px;border-radius:50%;background:radial-gradient(circle at 50% 30%,#e88060 0,#70a060 35%,#3070a8 70%);border:2px solid #c8d8e8"></div>
<div class="tb" style="left:228px"></div><div class="tb" style="left:340px"></div><div class="tb" style="left:453px"></div><div class="tb" style="left:566px"></div><div class="tb" style="left:679px"></div><div class="tb" style="left:792px"></div><div class="tb" style="left:905px"></div><div class="tb" style="left:1018px"></div><div class="tb" style="left:1131px"></div>
<div style="left:1426px;top:870px;width:14px;height:8px;background:#6a94b4;border:1px solid #a8c4d8"></div>
</div></body></html>
